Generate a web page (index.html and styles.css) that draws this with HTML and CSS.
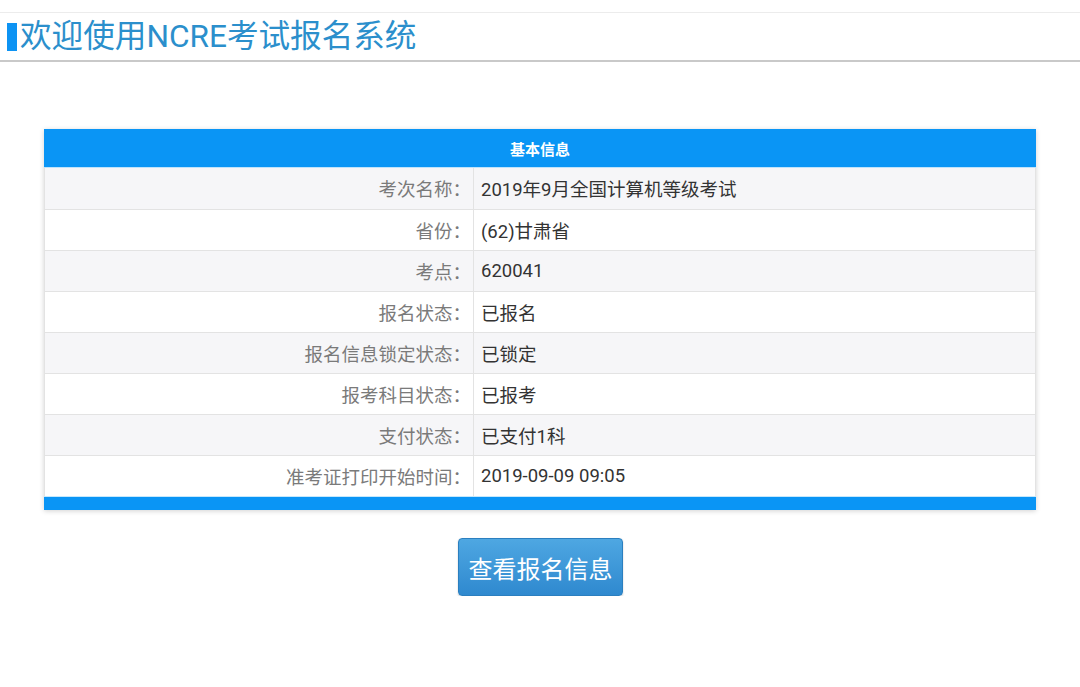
FILE: index.html
```html
<!DOCTYPE html>
<html lang="zh">
<head>
<meta charset="utf-8">
<link rel="stylesheet" href="styles.css">
</head>
<body>
<div class="header">
  <h1 class="title"><span class="marker"></span>欢迎使用NCRE考试报名系统</h1>
</div>
<div class="panel">
  <div class="panel-head">基本信息</div>
  <table class="info">
    <tr class="odd"><td class="label">考次名称：</td><td class="value">2019年9月全国计算机等级考试</td></tr>
    <tr><td class="label">省份：</td><td class="value">(62)甘肃省</td></tr>
    <tr class="odd"><td class="label">考点：</td><td class="value">620041</td></tr>
    <tr><td class="label">报名状态：</td><td class="value">已报名</td></tr>
    <tr class="odd"><td class="label">报名信息锁定状态：</td><td class="value">已锁定</td></tr>
    <tr><td class="label">报考科目状态：</td><td class="value">已报考</td></tr>
    <tr class="odd"><td class="label">支付状态：</td><td class="value">已支付1科</td></tr>
    <tr><td class="label">准考证打印开始时间：</td><td class="value">2019-09-09 09:05</td></tr>
  </table>
  <div class="panel-foot"></div>
</div>
<div class="actions">
  <button class="btn">查看报名信息</button>
</div>
</body>
</html>
```
FILE: styles.css
```css
html, body {
  margin: 0;
  padding: 0;
  background: #ffffff;
  font-family: Roboto, "Noto Sans CJK SC", "Noto Sans", sans-serif;
}
.header {
  margin-top: 12px;
  border-top: 1px solid #ececec;
  border-bottom: 2px solid #c9c9c9;
  height: 47px;
  box-sizing: content-box;
  display: flex;
  align-items: center;
}
.title {
  margin: 0;
  padding-left: 7px;
  display: flex;
  align-items: center;
  font-size: 31.6px;
  font-weight: normal;
  color: #2b8fcc;
  line-height: 32px;
}
.marker {
  display: inline-block;
  width: 10px;
  height: 28px;
  background: #0d93f3;
  margin-right: 3px;
}
.panel {
  margin: 67px 44px 0;
  box-shadow: 0 1px 5px rgba(0, 0, 0, 0.18);
}
.panel-head {
  height: 38px;
  background: #0a95f5;
  color: #ffffff;
  font-weight: bold;
  font-size: 15px;
  display: flex;
  align-items: center;
  justify-content: center;
  border-bottom: 1px solid #bfe3fb;
}
.info {
  width: 100%;
  border-collapse: collapse;
  font-size: 18.5px;
}
.info tr {
  height: 41px;
  background: #ffffff;
}
.info tr.odd {
  background: #f6f6f8;
}
.info td {
  border-top: 1px solid #e3e3e3;
  padding: 0;
}
.info tr:first-child td {
  border-top: none;
}
.label {
  width: 429px;
  text-align: right;
  color: #7a7a7a;
  padding-right: 2px !important;
  border-right: 1px solid #e3e3e3;
  border-left: 1px solid #e3e3e3;
  box-sizing: border-box;
}
.value {
  color: #333333;
  padding-left: 7px !important;
  border-right: 1px solid #e3e3e3;
}
.panel-foot {
  height: 13px;
  background: #0a95f5;
  border-top: 1px solid #c6e8fc;
}
.actions {
  display: flex;
  justify-content: center;
  margin-top: 28px;
  padding-left: 1px;
}
.btn {
  width: 165px;
  height: 58px;
  border: 1px solid #2b7fbf;
  border-radius: 4px;
  background: linear-gradient(#4ea7e2, #2f89cf);
  color: #ffffff;
  font-family: Roboto, "Noto Sans CJK SC", sans-serif;
  font-size: 24px;
  padding: 0;
  box-shadow: 0 1px 2px rgba(0, 0, 0, 0.2);
}
```
